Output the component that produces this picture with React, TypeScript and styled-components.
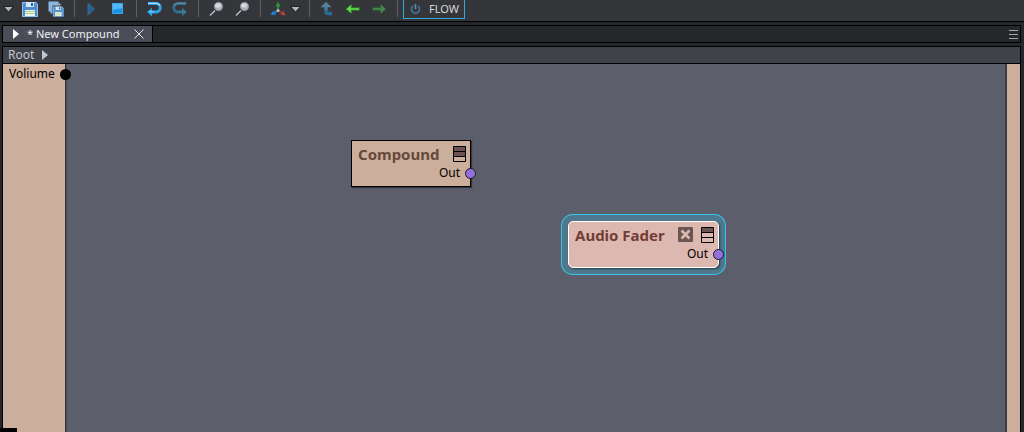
import React from "react";
import styled, { createGlobalStyle } from "styled-components";

const GlobalStyle = createGlobalStyle`
  * { box-sizing: border-box; }
  body {
    margin: 0;
    background: #26272b;
    font-family: "Noto Sans", "Open Sans", sans-serif;
    font-size: 12px;
    line-height: 16px;
    overflow: hidden;
  }
  button { font: inherit; color: inherit; padding: 0; margin: 0; border: 0; background: none; cursor: pointer; }
  svg { display: block; flex: none; overflow: visible; }
`;

const Page = styled.div`
  display: flex;
  flex-direction: column;
  gap: 3px;
  min-height: 100vh;
`;

const Toolbar = styled.header`
  display: flex;
  align-items: flex-start;
  height: 22px;
  background: #35363a;
  border-bottom: 1px solid #000;
`;

const ToolButton = styled.button<{ $width?: number; $align?: string }>`
  display: flex;
  align-items: center;
  justify-content: ${(p) => p.$align ?? "center"};
  width: ${(p) => p.$width ?? 26}px;
  height: 18px;
`;

const Separator = styled.div`
  width: 1px;
  height: 17px;
  margin: 0 4px 0 5px;
  background: #5d5e68;
`;

const FlowButton = styled.button`
  display: flex;
  align-items: center;
  gap: 8px;
  height: 19px;
  margin-left: 1px;
  padding: 0 5px 0 6px;
  border: 1px solid #2fa8dc;
  border-top: 0;
  color: #d6d7dc;
  font-size: 11px;
`;

const Frame = styled.div`
  display: flex;
  margin: 0 3px 0 2px;
  border: 1px solid #000;
`;

const TabStrip = styled(Frame)`
  justify-content: space-between;
  height: 18px;
  background: #26272b;
`;

const Tab = styled.div`
  display: flex;
  align-items: center;
  padding: 0 8px 0 10px;
  background: #4a4c57;
  border-right: 1px solid #000;
  color: #f0f0f2;
  font-size: 11px;
`;

const TabTitle = styled.button`
  display: flex;
  align-items: center;
  gap: 8px;
  margin-right: 15px;
`;

const MenuButton = styled.button`
  display: flex;
  align-items: center;
  padding-right: 2px;
`;

const Workspace = styled(Frame)`
  flex: 1;
  flex-direction: column;
  border-bottom: 0;
`;

const Breadcrumb = styled.nav`
  display: flex;
  align-items: center;
  gap: 8px;
  height: 17px;
  padding-left: 5px;
  background: #41434b;
  border-bottom: 1px solid #000;
  color: #c4c6cc;

  a { color: inherit; text-decoration: none; }
`;

const Graph = styled.main`
  display: flex;
  flex: 1;
  background: #5c5e6b;
`;

const InputRail = styled.aside`
  position: relative;
  width: 63px;
  padding: 2px 0 0 6px;
  background: #cbae9c;
  border-right: 1px solid #33343c;
`;

const OutputRail = styled.aside`
  width: 15px;
  background: #cbae9c;
  border-left: 2px solid #3c3e47;
`;

const Canvas = styled.div`
  position: relative;
  flex: 1;
  border-left: 1px solid #484a55;
`;

const RailPort = styled.span`
  position: absolute;
  top: 5px;
  right: -6px;
  width: 11px;
  height: 11px;
  border-radius: 50%;
  background: #000;
  z-index: 1;
`;

const Node = styled.section<{ $x: number; $y: number; $width: number; $selected?: boolean }>`
  position: absolute;
  left: ${(p) => p.$x}px;
  top: ${(p) => p.$y}px;
  width: ${(p) => p.$width}px;
  height: 47px;
  padding: 5px 4px 0 6px;
  color: #000;
  background: ${(p) => (p.$selected ? "#ddb8b1" : "#cbae9c")};
  border: 1px solid ${(p) => (p.$selected ? "#fff" : "#000")};
  border-radius: ${(p) => (p.$selected ? 5 : 0)}px;
  box-shadow: ${(p) =>
    p.$selected
      ? "1px 1px 2px #243c4a, 0 0 0 6px #4f788c, 0 0 0 7px #35c4ec"
      : "1px 1px 1px #34353d"};
`;

const NodeHeader = styled.header`
  display: flex;
  align-items: flex-start;
  gap: 8px;
  height: 18px;
`;

const NodeTitle = styled.h2<{ $color: string }>`
  flex: 1;
  margin: 0;
  font-size: 15px;
  line-height: 16px;
  font-weight: 700;
  white-space: nowrap;
  color: ${(p) => p.$color};
`;

const NodeOutput = styled.div`
  display: flex;
  justify-content: flex-end;
  padding-right: 6px;
  line-height: 17px;
`;

const Port = styled.span`
  position: absolute;
  right: -6px;
  top: 27px;
  width: 11px;
  height: 11px;
  border: 1px solid #1b1626;
  border-radius: 50%;
  background: #9370db;
  z-index: 1;
`;

const Corner = styled.div`
  position: fixed;
  left: 0;
  bottom: 0;
  width: 17px;
  height: 4px;
  background: #000;
`;

const Caret = () => (
  <svg width="9" height="6" viewBox="0 0 9 6">
    <path d="M-.5 .5h10L4.500 6z" fill="#b4b6be" stroke="#0c0c0e" strokeWidth=".8" />
  </svg>
);

const Icon = ({ children }: { children: React.ReactNode }) => (
  <svg width="16" height="16" viewBox="0 0 16 16">{children}</svg>
);

const Floppy = () => (
  <>
    <path d="M0 1h14l2 2v13H0z" fill="#4f8fd0" />
    <path d="M.5 1.500h13.300l1.700 1.700v12.300H.5z" fill="none" stroke="#8fbfeb" />
    <path d="M4 1h8v5H4z" fill="#d5e6f5" />
    <path d="M9 2h2v3H9z" fill="#2c5d94" />
    <path d="M3 9h10v6H3z" fill="#eff4ee" />
    <path d="M3 10.500h10M3 12.500h10" stroke="#a9cf8b" />
  </>
);

const Save = () => <Icon><Floppy /></Icon>;

const SaveAll = () => (
  <Icon>
    <path d="M1.500 10.500v-9h9M3.500 12.500v-9h9" fill="none" stroke="#8bb7df" strokeWidth="2" />
    <g transform="translate(5 5) scale(.66)"><Floppy /></g>
  </Icon>
);

const Play = () => (
  <Icon><path d="M4 2.500l6.500 5.500L4 14z" fill="#246093" stroke="#397da9" strokeWidth=".7" /></Icon>
);

const Stop = () => (
  <Icon>
    <path d="M2 2h11v11H2z" fill="#1d91e5" />
    <path d="M2 2h11v5L2 9z" fill="#54b8f5" />
    <path d="M2.500 2.500h10v10h-10z" fill="none" stroke="#38a7ee" />
  </Icon>
);

const Undo = ({ flip = false, top = "#8dd5fa", color = "#2d9fea" }) => (
  <Icon>
    <g transform={flip ? "matrix(-1 0 0 1 16 0)" : undefined}>
      <path d="M2 2.500h8a4 4 0 0 1 0 8.500H6" fill="none" stroke={color} strokeWidth="3" />
      <path d="M2 2.200h8q3 0 4 2.500" fill="none" stroke={top} strokeWidth="1.600" />
      <path d="M1 11l5-4.500v9z" fill={color} />
      <path d="M3 10.700h5" stroke={top} />
    </g>
  </Icon>
);

const Magnifier = () => (
  <Icon>
    <path d="M2 14.500l5-5" stroke="#c4c7cc" strokeWidth="1.300" />
    <circle cx="10.500" cy="5.500" r="4.200" fill="#adb3bc" stroke="#878d98" strokeWidth=".8" />
    <ellipse cx="10" cy="4.500" rx="2.800" ry="2.200" fill="#d5d9df" />
  </Icon>
);

const Axes = () => (
  <Icon>
    <path d="M8 10V4" stroke="#2f973b" strokeWidth="1.600" />
    <path d="M8 .5l2.500 5h-5z" fill="#2f973b" />
    <path d="M8 9.500l-4 2.700" stroke="#2b83c9" strokeWidth="1.600" />
    <path d="M.5 14l2.800-4.500 2.500 4.300z" fill="#1687df" />
    <path d="M8 9.500l4 2.700" stroke="#a83b3d" strokeWidth="1.600" />
    <path d="M15.500 14.500l-5-1 3-4z" fill="#bc3d3f" />
    <circle cx="8" cy="9.500" r="1.500" fill="#b7bec4" />
  </Icon>
);

const UpLevel = () => (
  <Icon>
    <path d="M7 5v5.500q0 2 2 2h4" fill="none" stroke="#286c96" strokeWidth="3.500" />
    <path d="M7 .8l5.500 5.500h-11z" fill="#55829d" />
    <path d="M7 5v4" stroke="#4a7b98" strokeWidth="3" />
  </Icon>
);

const ArrowIcon = ({ flip = false, color = "#66dc4e", edge = "#2b9d2d" }) => (
  <Icon>
    <g transform={flip ? "matrix(-1 0 0 1 16 0)" : undefined}>
      <path d="M1 8l5.500-5v3.500h8v3h-8V13z" fill={edge} />
      <path d="M6 5L3 8h11M3 8l3 3" fill="none" stroke={color} strokeWidth="1.600" />
    </g>
  </Icon>
);

const Power = () => (
  <svg width="11" height="12" viewBox="0 0 11 12">
    <path d="M3 3a4 4 0 1 0 5 0" fill="none" stroke="#3f7196" strokeWidth="1.700" />
    <path d="M5.500 1v5" stroke="#5b8eaf" strokeWidth="1.600" />
  </svg>
);

const Arrowhead = ({ color }: { color: string }) => (
  <svg width="6" height="10" viewBox="0 0 6 10"><path d="M0 0l6 5-6 5z" fill={color} /></svg>
);

const StackIcon = ({ filled }: { filled: number }) => (
  <svg width="13" height="16" viewBox="0 0 13 16">
    <path d={`M1 1h11v${filled * 5}H1z`} fill="#6b5253" />
    <path d="M.5 .5h12v15H.5zM.5 5.500h12M.5 10.500h12" fill="none" stroke="#000" />
  </svg>
);

const CloseBox = () => (
  <svg width="15" height="15" viewBox="0 0 15 15">
    <rect width="15" height="15" rx="1" fill="#6b5553" />
    <path d="M3.500 3.500l8 8M11.500 3.500l-8 8" stroke="#ddb8b1" strokeWidth="2.600" />
  </svg>
);

export default function App() {
  return (
    <Page>
      <GlobalStyle />
      <Toolbar>
        <ToolButton $width={17} $align="space-evenly" aria-label="More files"><Caret /></ToolButton>
        <ToolButton aria-label="Save"><Save /></ToolButton>
        <ToolButton aria-label="Save all"><SaveAll /></ToolButton>
        <Separator />
        <ToolButton aria-label="Play"><Play /></ToolButton>
        <ToolButton aria-label="Stop"><Stop /></ToolButton>
        <Separator />
        <ToolButton aria-label="Undo"><Undo /></ToolButton>
        <ToolButton aria-label="Redo"><Undo flip top="#56849a" color="#346d8d" /></ToolButton>
        <Separator />
        <ToolButton aria-label="Zoom to selection"><Magnifier /></ToolButton>
        <ToolButton aria-label="Zoom to fit"><Magnifier /></ToolButton>
        <Separator />
        <ToolButton aria-label="Axes"><Axes /></ToolButton>
        <ToolButton $width={13} $align="flex-start" aria-label="Axes options"><Caret /></ToolButton>
        <Separator />
        <ToolButton aria-label="Up one level"><UpLevel /></ToolButton>
        <ToolButton aria-label="Back"><ArrowIcon /></ToolButton>
        <ToolButton aria-label="Forward"><ArrowIcon flip color="#4b8a4c" edge="#367039" /></ToolButton>
        <Separator />
        <FlowButton><Power />FLOW</FlowButton>
      </Toolbar>

      <TabStrip>
        <Tab>
          <TabTitle><Arrowhead color="#fff" />* New Compound</TabTitle>
          <button aria-label="Close tab">
            <svg width="10" height="10" viewBox="0 0 10 10">
              <path d="M.5 .5l9 9M9.500 .5l-9 9" stroke="#e4e5e9" />
            </svg>
          </button>
        </Tab>
        <MenuButton aria-label="Tab list">
          <svg width="9" height="9" viewBox="0 0 9 9">
            <path d="M0 .5h9M0 4.500h9M0 8.500h9" stroke="#a3a4ad" />
          </svg>
        </MenuButton>
      </TabStrip>

      <Workspace>
        <Breadcrumb>
          <a href="#root">Root</a>
          <Arrowhead color="#c4c6cc" />
        </Breadcrumb>
        <Graph>
          <InputRail>Voliume<RailPort /></InputRail>
          <Canvas>
            <Node $x={284} $y={76} $width={120}>
              <NodeHeader>
                <NodeTitle $color="#664a3b">Compound</NodeTitle>
                <StackIcon filled={2} />
              </NodeHeader>
              <NodeOutput>Out</NodeOutput>
              <Port />
            </Node>
            <Node $x={501} $y={157} $width={151} $selected>
              <NodeHeader>
                <NodeTitle $color="#733d37">Audio Fader</NodeTitle>
                <CloseBox />
                <StackIcon filled={1} />
              </NodeHeader>
              <NodeOutput>Out</NodeOutput>
              <Port />
            </Node>
          </Canvas>
          <OutputRail />
        </Graph>
      </Workspace>
      <Corner />
    </Page>
  );
}
